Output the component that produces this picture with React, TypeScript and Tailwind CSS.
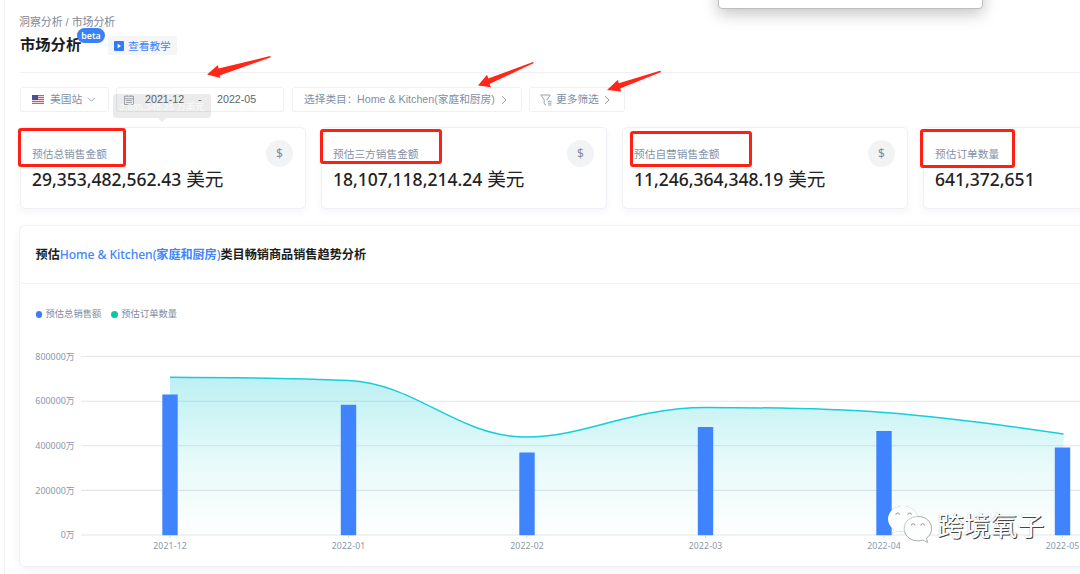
import React from "react";

const UI = "font-['Liberation_Sans','Noto_Sans_CJK_SC',sans-serif]";
const HUM = "font-['Noto_Sans','Noto_Sans_CJK_SC',sans-serif]";

function Chevron({ className }: { className: string }) {
  return (
    <svg viewBox="0 0 10 10" className={className} fill="none" stroke="#93a0b2" strokeWidth="1">
      <path d="M3 1.2 L7 5 L3 8.8" />
    </svg>
  );
}

function Flag() {
  return (
    <svg viewBox="0 0 12 9" className="h-[9px] w-3 shrink-0">
      <rect width="12" height="9" fill="#f6d5da" />
      {[0, 2, 4, 6, 8].map((y) => (
        <rect key={y} y={y} width="12" height="1" fill="#e8505f" />
      ))}
      <rect width="6" height="5" fill="#45548f" />
    </svg>
  );
}

function Calendar() {
  return (
    <svg viewBox="0 0 10 10" className="h-[10px] w-[10px] shrink-0" fill="none" stroke="#a3a8b0" strokeWidth="0.9">
      <rect x="0.5" y="1.2" width="9" height="8.3" />
      <path d="M0.5 3.7H9.5M3 0V2M7 0V2M2 5.5H8M2 7.5H8" />
    </svg>
  );
}

function Filter() {
  return (
    <svg viewBox="0 0 12 12" className="h-3 w-3 shrink-0" fill="none" stroke="#8a97ab" strokeWidth="0.9">
      <path d="M6 11 L4.2 9.8 V5.8 L0.8 1 H10.2 L7 5.8 V6.5M8 7.3H11.5M8 9.2H11.5M8 11H11.5" />
    </svg>
  );
}

const cards = [
  { label: "预估总销售金额", value: "29,353,482,562.43", unit: "美元", mark: "-left-[3px] top-0 h-[39px] w-[108px]" },
  { label: "预估三方销售金额", value: "18,107,118,214.24", unit: "美元", mark: "-left-[2px] top-px h-[35px] w-[122px]" },
  { label: "预估自营销售金额", value: "11,246,364,348.19", unit: "美元", mark: "left-[7px] top-[3px] h-[36px] w-[122px]" },
  { label: "预估订单数量", value: "641,372,651", unit: "", mark: "-left-[4px] top-px h-[39px] w-[95px]" },
];

function StatCard({ label, value, unit, mark }: (typeof cards)[number]) {
  return (
    <div className="relative flex h-[82px] w-[286px] shrink-0 justify-between rounded-[5px] border border-[#f0f1f7] bg-white pl-[11px] pr-[12px] pt-[12px] shadow-[0_3px_8px_rgba(40,50,90,0.05)]">
      <div>
        <div className={`mt-[7px] h-[14px] whitespace-nowrap text-[10.7px] leading-[14px] text-[#8493a8] ${UI}`}>{label}</div>
        <div className={`mt-[6px] whitespace-nowrap text-[17.5px] font-medium leading-6 text-[#222] ${HUM}`}>
          {value}
          {unit && <span className="ml-[5px] text-[18.6px] font-normal">{unit}</span>}
        </div>
      </div>
      <div className={`flex h-[27px] w-[27px] items-center justify-center rounded-full bg-[#f1f3f5] text-[12px] text-[#8190a2] ${HUM}`}>$</div>
      <div className={`absolute rounded-[3px] border-[3px] border-[#ff2015] ${mark}`} />
    </div>
  );
}

const bars = [
  { x: 170, top: 394.5, month: "2021-12" },
  { x: 348.5, top: 404.8, month: "2022-01" },
  { x: 527, top: 452.5, month: "2022-02" },
  { x: 705.5, top: 427, month: "2022-03" },
  { x: 884, top: 431, month: "2022-04" },
  { x: 1062.5, top: 447.5, month: "2022-05" },
];
const ticks = [
  { y: 356.5, label: "800000万" },
  { y: 401.2, label: "600000万" },
  { y: 445.8, label: "400000万" },
  { y: 490.4, label: "200000万" },
  { y: 535, label: "0万" },
];
const curve =
  "M170 377.3 C240 377.6 292 378.3 348.5 380.5 C418 384 457 437 527 437 C584 437 632 407.5 705.5 407.5 C770 407.5 824 408 884 412.5 C946 417 1003 425 1063.5 434";

function Chart() {
  return (
    <svg viewBox="20 330 1060 230" className={`block h-[230px] w-[1060px] ${HUM}`}>
      <defs>
        <linearGradient id="area" x1="0" y1="377" x2="0" y2="535" gradientUnits="userSpaceOnUse">
          <stop offset="0" stopColor="#00c5d2" stopOpacity="0.26" />
          <stop offset="0.55" stopColor="#00c5c8" stopOpacity="0.09" />
          <stop offset="1" stopColor="#00c5b0" stopOpacity="0.005" />
        </linearGradient>
      </defs>
      {ticks.map((t) => (
        <g key={t.label}>
          <line x1="81" x2="1080" y1={t.y} y2={t.y} stroke="#e3e5e9" strokeWidth="1.1" />
          <text x="74.7" y={t.y + 3.2} textAnchor="end" fontSize="8.9" fill="#8997aa">{t.label}</text>
        </g>
      ))}
      <path d={`${curve} V535 H170 Z`} fill="url(#area)" />
      {bars.map((b) => (
        <g key={b.month}>
          <rect x={b.x - 7.7} y={b.top} width="15.4" height={535.2 - b.top} fill="#3f83ff" />
          <line x1={b.x} x2={b.x} y1="535.5" y2="538" stroke="#d4d8de" />
          <text x={b.x} y="548.5" textAnchor="middle" fontSize="8.7" fill="#8997aa" textLength="33.5">{b.month}</text>
        </g>
      ))}
      <path d={curve} fill="none" stroke="#18cddb" strokeWidth="1.5" />
    </svg>
  );
}

function Arrows() {
  return (
    <svg viewBox="0 0 1080 574" className="pointer-events-none absolute left-0 top-0 h-[574px] w-[1080px]" fill="#ff2718">
      <path d="M207 74.5 L218 65 L218.5 68.5 L270 56 L271 57.3 L219.5 75.5 L220.5 78 Z" />
      <path d="M478 85.5 L487 74.8 L488.3 78.4 L533 62 L534 63 L489.5 84 L491 87.2 Z" />
      <path d="M607 90 L618 79.8 L618.7 83.2 L660 70.8 L661.3 72 L620.5 88.2 L621 91.5 Z" />
    </svg>
  );
}

function Watermark() {
  return (
    <div className="absolute left-[887px] top-[505px] flex h-[40px] items-center">
      <svg viewBox="0 0 46 40" className="h-[40px] w-[46px] drop-shadow-[0.3px_0.6px_0.3px_rgba(60,60,60,0.6)]">
        <path d="M16 1 C7.5 1 1 6.7 1 14 C1 18.3 3 21.8 6.6 24.2 L5.2 28.7 L10.4 26 C12.2 26.5 14 26.8 16 26.8 C24.5 26.8 31 21 31 14 C31 6.7 24.5 1 16 1Z" fill="#fdfefe" />
        <path d="M8.8 9.8 A1.8 1.8 0 0 1 12.4 9.8 M20.8 9.8 A1.8 1.8 0 0 1 24.4 9.8" fill="none" stroke="#7b8282" strokeWidth="0.8" />
        <path d="M31 11.5 C23 11.5 17.2 16.6 17.2 23.6 C17.2 30.6 23.2 35.8 31 35.8 C32.8 35.8 34.3 35.5 35.8 35 L40.5 37.3 L39.4 33.2 C42.6 30.9 44.5 27.6 44.5 23.6 C44.5 16.6 38.7 11.5 31 11.5Z" fill="#fdfefe" stroke="#8f9494" strokeWidth="0.5" />
        <path d="M24.4 20.5 A1.8 1.8 0 0 1 28 20.5 M33.8 20.5 A1.8 1.8 0 0 1 37.4 20.5" fill="none" stroke="#7b8282" strokeWidth="0.8" />
      </svg>
      <span className="ml-[4px] whitespace-nowrap font-['Noto_Sans_CJK_SC',sans-serif] text-[26.8px] font-normal leading-[40px] text-white [text-shadow:1px_1px_0.6px_#444,0_0_1px_#aaa]">跨境氧子</span>
    </div>
  );
}

export default function App() {
  const box = "flex h-[25px] shrink-0 items-center rounded-[3px] border border-[#eff0f7] bg-white text-[10.7px] text-[#8090a6]";
  return (
    <div className={`relative h-[574px] w-[1080px] overflow-hidden bg-white pl-1 ${UI}`}>
      <div className="h-full border-l border-[#f0f0f8] pl-[15px]">
        <header className="h-[73px] border-b border-[#eff0f6] pt-[15px]">
          <div className="-ml-px h-[14px] text-[10.9px] leading-[14px] text-[#7d8898]">洞察分析 / 市场分析</div>
          <div className="mt-[6px] flex h-5 items-center">
            <h1 className="relative w-[61px] whitespace-nowrap text-[15.3px] font-bold leading-5 text-[#1b1b1b]">
              市场分析
              <span className={`absolute -top-[7px] left-[57px] flex h-[15px] w-7 items-center justify-center rounded-full bg-[#3b80fb] text-[8.8px] font-semibold text-white ${HUM}`}>beta</span>
            </h1>
            <a className="ml-[27px] mt-px flex h-[19px] w-[69px] items-center rounded-[2px] bg-[#f3f5f7] pl-[6px] text-[10.7px] text-[#4385fb]">
              <svg viewBox="0 0 10 10" className="mr-[4px] h-[10px] w-[10px] shrink-0">
                <rect width="10" height="10" rx="1" fill="#337bfa" />
                <path d="M3.7 2.8 L7 5 L3.7 7.2Z" fill="#fff" />
              </svg>
              <span className="mt-[2px] whitespace-nowrap">查看教学</span>
            </a>
          </div>
        </header>

        <div className="mt-[14px] flex h-[25px]">
          <div className={`${box} w-[89px] pl-[11px]`}>
            <Flag />
            <span className="ml-[6px]">美国站</span>
            <Chevron className="ml-[5px] h-[9px] w-[9px] rotate-90" />
          </div>
          <div className={`${box} relative ml-[7px] w-[168px] pl-[7px] text-[#60656e]`}>
            <Calendar />
            <span className="ml-[11px] w-[40px]">2021-12</span>
            <span className="ml-[13px] w-[4px]">-</span>
            <span className="ml-[15px]">2022-05</span>
            <div className="absolute -left-[4px] top-[6px] h-[24px] w-[98px] rounded-[3px] bg-[rgba(70,70,70,0.11)] pt-[6px] text-center text-[9.3px] leading-[14px] text-white/80">
              <span className="whitespace-nowrap">2,935,348.25 万美元</span>
              <svg viewBox="0 0 8 4" className="absolute left-[45px] top-[24px] h-1 w-2"><path d="M0 0H8L4 4Z" fill="rgba(70,70,70,0.11)" /></svg>
            </div>
          </div>
          <div className={`${box} ml-[8px] w-[230px] pl-[11px]`}>
            <span className="w-[53px] whitespace-nowrap">选择类目：</span>
            <span className="whitespace-nowrap">Home &amp; Kitchen(家庭和厨房)</span>
            <Chevron className="ml-[4px] h-[10px] w-[10px]" />
          </div>
          <div className={`${box} ml-[7px] w-[96px] pl-[10px]`}>
            <Filter />
            <span className="ml-[4px]">更多筛选</span>
            <Chevron className="ml-[3px] h-[10px] w-[10px]" />
          </div>
        </div>

        <div className="mt-[15px] flex gap-[15px]">
          {cards.map((c) => (
            <StatCard key={c.label} {...c} />
          ))}
        </div>

        <section className="-ml-px mt-[16px] h-[342px] w-[1080px] rounded-[6px] border border-[#f0f1f7] bg-white shadow-[0_3px_9px_rgba(40,50,90,0.06)]">
          <h2 className={`flex h-[58px] items-center whitespace-nowrap border-b border-[#f1f2f8] pl-[15.5px] pt-[2px] text-[12.15px] font-bold text-[#1d1d1d] ${HUM}`}>
            <span>预估</span>
            <span className="font-medium tracking-[-0.08px] text-[#4385fb]">Home &amp; Kitchen(<b className="font-bold">家庭和厨房</b>)</span>
            <span>类目畅销商品销售趋势分析</span>
          </h2>
          <div className="flex h-[46px] items-end pl-[15.5px] text-[9.3px] leading-[14px] text-[#7f8c9e]">
            <div className="flex h-[23px] items-start">
              <i className="mr-[3.5px] mt-1 h-[6.5px] w-[6.5px] rounded-full bg-[#3b7dfc]" />
              <span>预估总销售额</span>
              <i className="ml-[10px] mr-[3.5px] mt-1 h-[6.5px] w-[6.5px] rounded-full bg-[#08c9a4]" />
              <span>预估订单数量</span>
            </div>
          </div>
          <Chart />
        </section>
      </div>

      <div className="absolute -top-5 left-[718px] h-[29px] w-[265px] rounded-[4px] border border-[#bdbdbd] bg-white shadow-[0_5px_16px_rgba(0,0,0,0.23)]" />
      <Arrows />
      <Watermark />
    </div>
  );
}
